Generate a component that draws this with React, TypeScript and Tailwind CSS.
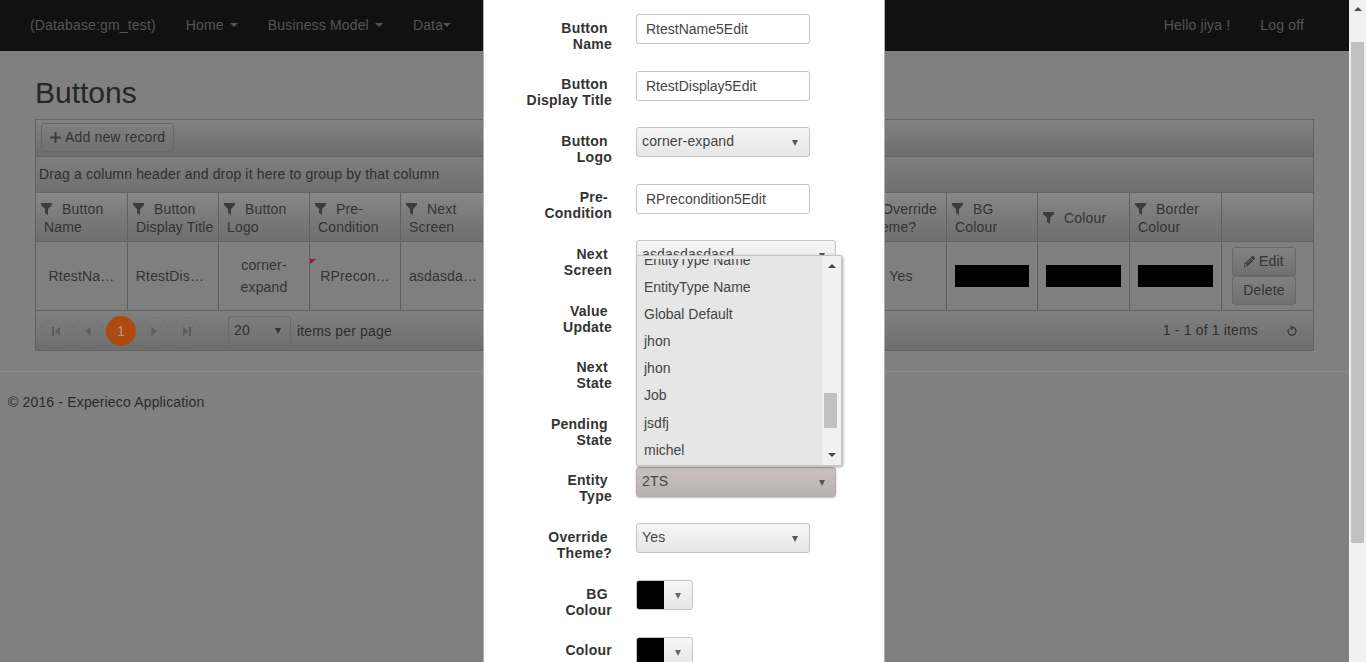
import { FaPencilAlt } from 'react-icons/fa'

const COLUMNS = [
  ['Button', 'Name'],
  ['Button', 'Display Title'],
  ['Button', 'Logo'],
  ['Pre-', 'Condition'],
  ['Next', 'Screen'],
  ['Value', 'Update'],
  ['Next', 'State'],
  ['Pending', 'State'],
  ['Entity', 'Type'],
  ['Override', 'Theme?'],
  ['BG', 'Colour'],
  ['Colour'],
  ['Border', 'Colour'],
]

const CELLS = ['RtestNa…', 'RtestDis…', '', 'RPrecon…', 'asdasda…', '', '', '', '', 'Yes']

const POPUP_ITEMS = ['EntityType Name', 'Global Default', 'jhon', 'jhon', 'Job', 'jsdfj', 'michel']

const GRID_COLS = 'grid grid-cols-[92px_repeat(10,91px)_92px_92px_1fr]'

function Caret({ className }: { className: string }) {
  return <span className={`inline-block w-0 h-0 border-x-[4px] border-x-transparent border-t-[4px] ${className}`} />
}

function SelectArrow({ className }: { className: string }) {
  return <span className={`inline-block w-0 h-0 border-x-[3.5px] border-x-transparent border-t-[6px] ${className}`} />
}

function Funnel() {
  return (
    <svg width="11" height="12" viewBox="0 0 11 12" className="inline-block align-[-1px] mr-[10px] -ml-[3px] text-[#3c3c3c]">
      <path d="M0 0h11v2L7 6v6L4 10V6L0 2z" fill="currentColor" />
    </svg>
  )
}

function PagerButton({ kind }: { kind: 'first' | 'prev' | 'next' | 'last' }) {
  return (
    <span className="w-[29px] h-[29px] rounded-full border border-[#747474] flex items-center justify-center">
      <svg width="8" height="9" viewBox="0 0 8 9" className="text-[#5c5c5c]">
        {kind === 'first' && <path d="M0 0h2v9H0zM8 0v9L3 4.5z" fill="currentColor" />}
        {kind === 'prev' && <path d="M6.5 0v9L1.5 4.5z" fill="currentColor" />}
        {kind === 'next' && <path d="M1.5 0v9l5-4.5z" fill="currentColor" />}
        {kind === 'last' && <path d="M6 0h2v9H6zM0 0v9l5-4.5z" fill="currentColor" />}
      </svg>
    </span>
  )
}

function HeaderCell({ lines }: { lines: string[] }) {
  return (
    <div className="border-r border-[#606060] flex items-center pl-[8px] pt-[2px] leading-[18px] text-[#333333] min-w-0 overflow-hidden">
      <div className="whitespace-nowrap">
        <Funnel />
        {lines[0]}
        {lines[1] && <br />}
        {lines[1]}
      </div>
    </div>
  )
}

function Background() {
  return (
    <div className="flex-1 min-w-0 bg-[#808080] text-[14px] tracking-[0.16px] text-[#2e2e2e]">
      {/* Navbar */}
      <div className="h-[51px] bg-[#111111] flex items-center pl-[30px] pr-[45px] gap-[30px] text-[#555555] pb-[1px]">
        <span>(Database:gm_test)</span>
        <span className="flex items-center gap-[6px]">Home <Caret className="border-t-[#555555]" /></span>
        <span className="flex items-center gap-[6px]">Business Model <Caret className="border-t-[#555555]" /></span>
        <span className="flex items-center">Data<Caret className="border-t-[#555555]" /></span>
        <span className="ml-auto">Hello jiya !</span>
        <span>Log off</span>
      </div>

      <div className="px-[35px]">
        <h1 className="text-[30px] leading-[33px] mt-[25px] mb-[10px] text-[#262626] tracking-normal">Buttons</h1>

        {/* Grid */}
        <div className="border border-[#636363] w-[1279px]">
          <div className="h-[37px] border-b border-[#636363] bg-gradient-to-b from-[#828282] to-[#6d6d6d] flex items-center pl-[5px] pb-[1px]">
            <div className="h-[29px] w-[133px] border border-[#686868] rounded-[3px] flex items-center pl-[8px] gap-[4px] text-[#333333]">
              <svg width="11" height="11" viewBox="0 0 11 11"><path d="M4.5 0h2v4.5H11v2H6.5V11h-2V6.5H0v-2h4.5z" fill="#3c3c3c" /></svg>
              Add new record
            </div>
          </div>
          <div className="h-[36px] border-b border-[#636363] bg-gradient-to-b from-[#7e7e7e] to-[#707070] flex items-center pl-[3px] text-[#2e2e2e]">
            Drag a column header and drop it here to group by that column
          </div>
          <div className={`${GRID_COLS} h-[49px] border-b border-[#636363] bg-gradient-to-b from-[#878787] to-[#6e6e6e]`}>
            {COLUMNS.map((lines, i) => <HeaderCell key={i} lines={lines} />)}
            <div />
          </div>
          <div className={`${GRID_COLS} h-[69px] border-b border-[#636363] bg-[#7f7f7f] text-[#333333]`}>
            {CELLS.map((text, i) => (
              <div
                key={i}
                className={`relative border-r border-[#606060] flex items-center justify-center text-center leading-[22px] min-w-0 ${i === 1 || i === 4 ? 'pr-[6px]' : ''}`}
              >
                {i === 2 ? <span>corner-<br />expand</span> : text}
                {i === 3 && <span className="absolute left-0 top-[17px] w-0 h-0 border-t-[5px] border-t-[#a8102c] border-r-[6px] border-r-transparent" />}
              </div>
            ))}
            {[0, 1, 2].map(i => (
              <div key={i} className="border-r border-[#606060] flex items-center px-[8px]">
                <div className="h-[22px] w-full bg-black" />
              </div>
            ))}
            <div className="flex flex-col items-center justify-center pr-[7px]">
              <div className="h-[29px] w-[64px] border border-[#686868] rounded-[3px] bg-gradient-to-b from-[#828282] to-[#707070] flex items-center justify-center gap-[4px] text-[#333333]">
                <FaPencilAlt className="w-[11px] h-[11px] text-[#3c3c3c]" />
                Edit
              </div>
              <div className="h-[29px] w-[64px] border border-[#686868] rounded-[3px] bg-gradient-to-b from-[#828282] to-[#707070] flex items-center justify-center text-[#333333]">
                Delete
              </div>
            </div>
          </div>
          <div className="h-[39px] bg-gradient-to-b from-[#808080] to-[#6e6e6e] flex items-center pl-[5px] pr-[15px] pt-[1px]">
            <div className="flex items-center gap-[3.5px]">
              <PagerButton kind="first" />
              <PagerButton kind="prev" />
              <span className="w-[30px] h-[30px] rounded-full bg-[#ad4a12] text-[#d09070] flex items-center justify-center">1</span>
              <PagerButton kind="next" />
              <PagerButton kind="last" />
            </div>
            <div className="ml-[27px] h-[30px] w-[63px] border border-[#6a6a6a] rounded-[3px] flex items-center justify-between pl-[5px] pr-[9px] pb-[2px]">
              20
              <SelectArrow className="border-t-[#333333] mt-[2px]" />
            </div>
            <span className="ml-[6px]">items per page</span>
            <span className="ml-auto pb-[1px]">1 - 1 of 1 items</span>
            <svg width="12" height="12" viewBox="0 0 12 12" className="ml-[28px] text-[#3a3a3a]">
              <path d="M6 2.2a4 4 0 1 1-3.2 1.6" fill="none" stroke="currentColor" strokeWidth="1.3" />
              <path d="M4.4 0v4.4h3.2z" fill="currentColor" />
            </svg>
          </div>
        </div>
      </div>

      <div className="mt-[20px] border-t border-[#8a8a8a] pl-[8px] pt-[20px] text-[#2b2b2b]">© 2016 - Experieco Application</div>
    </div>
  )
}

function Field({ first, second, children }: { first: string; second?: string; children?: React.ReactNode }) {
  return (
    <div className="flex h-[56.6px]">
      <label className="w-[128px] mt-[5.7px] text-right font-bold leading-[16px] tracking-[0.25px] text-[#333333]">
        {first}{second && '\u00a0'}
        {second && <br />}
        {second}
      </label>
      <div className="ml-[24px]">{children}</div>
    </div>
  )
}

function TextBox({ value }: { value: string }) {
  return (
    <input
      readOnly
      value={value}
      className="block w-[174px] h-[30px] border border-[#c5c5c5] rounded-[3px] pl-[9px] text-[#444444] bg-white outline-none"
    />
  )
}

function Select({ value, wide, focused }: { value: string; wide?: boolean; focused?: boolean }) {
  const width = wide ? 'w-[200px] pr-[10px]' : 'w-[174px] pr-[11px]'
  const skin = focused
    ? 'bg-gradient-to-b from-[#c9c3c0] to-[#b8b0ac] border-[#b4acaa] shadow-[0_1px_2px_rgba(0,0,0,0.25)]'
    : 'bg-gradient-to-b from-[#f6f6f6] to-[#e6e6e6] border-[#c5c5c5] pb-[2px]'
  return (
    <div className={`${width} h-[30px] border rounded-[3px] flex items-center justify-between pl-[5px] tracking-[0.15px] text-[#444444] ${skin}`}>
      {value}
      <SelectArrow className="border-t-[#555555] mt-[3px]" />
    </div>
  )
}

function ColorPicker() {
  return (
    <div className="w-[57px] h-[30px] border border-[#c5c5c5] rounded-[3px] flex overflow-hidden bg-gradient-to-b from-[#f6f6f6] to-[#e6e6e6]">
      <div className="w-[27px] bg-black" />
      <div className="flex-1 flex items-center justify-center pt-[3px]">
        <SelectArrow className="border-t-[#666666]" />
      </div>
    </div>
  )
}

function Popup() {
  return (
    <div className="absolute left-[152px] top-[255px] w-[206px] h-[211px] border border-[#c5c5c5] rounded-[2px] bg-[#e6e6e6] shadow-[1px_1px_3px_rgba(0,0,0,0.35)] flex overflow-hidden text-[#444444]">
      <div className="flex-1 mt-[3px] pl-[7px] overflow-hidden">
        <div className="h-[27.2px] leading-[27.2px] -mt-[12.5px]">EntityType Name</div>
        {POPUP_ITEMS.map((item, i) => (
          <div key={i} className="h-[27.2px] leading-[27.2px]">{item}</div>
        ))}
      </div>
      <div className="w-[19px] bg-[#f1f1f1] relative flex flex-col items-center justify-between py-[8px]">
        <span className="w-0 h-0 border-x-[4px] border-x-transparent border-b-[4px] border-b-[#444444]" />
        <span className="absolute left-[2px] right-[4px] top-[137px] h-[35px] bg-[#c1c1c1]" />
        <span className="w-0 h-0 border-x-[4px] border-x-transparent border-t-[4px] border-t-[#444444]" />
      </div>
    </div>
  )
}

function Modal() {
  return (
    <div className="absolute left-[483px] top-0 w-[402px] h-full bg-white border-x border-[#b0b0b0] pt-[14px] overflow-hidden text-[14px]">
      <Field first="Button" second="Name"><TextBox value="RtestName5Edit" /></Field>
      <Field first="Button" second="Display Title"><TextBox value="RtestDisplay5Edit" /></Field>
      <Field first="Button" second="Logo"><Select value="corner-expand" /></Field>
      <Field first="Pre-" second="Condition"><TextBox value="RPrecondition5Edit" /></Field>
      <Field first="Next" second="Screen"><Select value="asdasdasdasd" wide /></Field>
      <Field first="Value" second="Update" />
      <Field first="Next" second="State" />
      <Field first="Pending" second="State" />
      <Field first="Entity" second="Type"><Select value="2TS" wide focused /></Field>
      <Field first="Override" second="Theme?"><Select value="Yes" /></Field>
      <Field first="BG" second="Colour"><ColorPicker /></Field>
      <Field first="Colour"><ColorPicker /></Field>
      <Popup />
    </div>
  )
}

function Scrollbar() {
  return (
    <div className="w-[17px] shrink-0 bg-[#f1f1f1] flex flex-col">
      <div className="h-[17px] flex items-center justify-center">
        <span className="w-0 h-0 border-x-[4px] border-x-transparent border-b-[4px] border-b-[#505050]" />
      </div>
      <div className="mt-[25px] h-[501px] bg-[#c1c1c1] ml-[2px] mr-[2px]" />
    </div>
  )
}

export default function App() {
  return (
    <div className="relative w-[1366px] h-[662px] overflow-hidden flex font-['Liberation_Sans',Arial,sans-serif]">
      <Background />
      <Scrollbar />
      <Modal />
    </div>
  )
}
